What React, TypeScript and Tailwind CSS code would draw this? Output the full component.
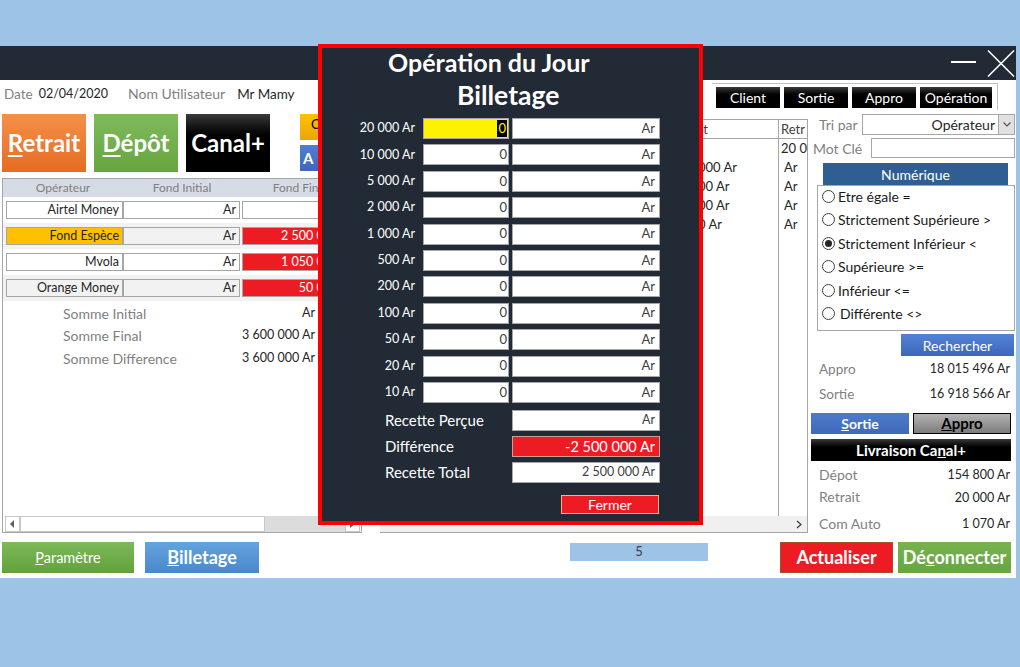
import React from "react";

const labelGray = "text-[#7f7f7f]";
const dark = "text-[#262626]";

function Cell({ w, bg, text, color }: { w: string; bg: string; text?: string; color?: string }) {
  return (
    <div className={`${w} shrink-0 h-[18px] border border-[#a6a6a6] ${bg} flex items-center justify-end pr-[3px] text-[12.5px] leading-none ${color ?? dark} overflow-hidden whitespace-nowrap`}>
      {text}
    </div>
  );
}

function Radio({ checked, label, far }: { checked?: boolean; label: string; far?: boolean }) {
  return (
    <div className="flex items-center h-[20px]">
      <span className="ml-[4px] shrink-0 w-[13px] h-[13px] rounded-full border border-[#404040] bg-white flex items-center justify-center">
        {checked && <span className="w-[7px] h-[7px] rounded-full bg-[#262626]" />}
      </span>
      <span className={`${far ? "ml-[5px]" : "ml-[3px]"} text-[14px] text-[#1a1a1a] whitespace-nowrap`}>{label}</span>
    </div>
  );
}

function BillRow({ label, first }: { label: string; first?: boolean }) {
  return (
    <div className="flex items-center h-[21px]">
      <div className="w-[93px] shrink-0 text-right text-[12.5px] text-white whitespace-nowrap">{label}</div>
      <div className={`ml-[8px] shrink-0 w-[86px] h-[21px] border border-[#a6a6a6] ${first ? "bg-[#fff200]" : "bg-white"} flex items-center justify-end pr-[1px] text-[13px] text-[#404040]`}>
        {first ? <span className="bg-black text-[#fff200] px-[1px] leading-[17px]">0</span> : "0"}
      </div>
      <div className="ml-[3px] shrink-0 w-[148px] h-[21px] border border-[#a6a6a6] bg-white flex items-center justify-end pr-[4px] text-[13px] text-[#404040]">Ar</div>
    </div>
  );
}

function TotRow({ label, value, red }: { label: string; value: string; red?: boolean }) {
  return (
    <div className="flex items-center h-[21px]">
      <div className="w-[190px] shrink-0 pl-[63px] text-[15px] text-white whitespace-nowrap">{label}</div>
      <div className={`w-[148px] shrink-0 h-[21px] border ${red ? "border-[#c9a18f] bg-[#ed1c24] text-white text-[14.5px]" : "border-[#a6a6a6] bg-white text-[#404040] text-[12.5px]"} flex items-center justify-end pr-[4px] whitespace-nowrap`}>{value}</div>
    </div>
  );
}

function ValRow({ label, value, extra }: { label: string; value: string; extra: string }) {
  return (
    <div className={`h-[22px] flex items-center justify-between pl-[8px] pr-[6px] ${extra}`}>
      <span className={`${labelGray} text-[13.5px]`}>{label}</span>
      <span className={`${dark} text-[12.5px]`}>{value}</span>
    </div>
  );
}

export default function App() {
  const bills = ["20 000 Ar", "10 000 Ar", "5 000 Ar", "2 000 Ar", "1 000 Ar", "500 Ar", "200 Ar", "100 Ar", "50 Ar", "20 Ar", "10 Ar"];
  return (
    <div className="relative w-[1020px] h-[667px] bg-[#9dc3e6] overflow-hidden font-['Lato',sans-serif]">
      <div className="h-[46px]" />
      <div className="w-[1016px] bg-white">
        {/* title bar */}
        <div className="h-[34px] bg-[#222a35] flex items-start justify-end pt-[4px] pr-[1px] gap-[10px]">
          <svg width="26" height="26" viewBox="0 0 26 26"><line x1="0" y1="12" x2="25" y2="12" stroke="white" strokeWidth="2" /></svg>
          <svg width="28" height="27" viewBox="0 0 28 27"><line x1="1" y1="0.5" x2="27" y2="26.5" stroke="white" strokeWidth="1.5" /><line x1="27" y1="0.5" x2="1" y2="26.5" stroke="white" strokeWidth="1.5" /></svg>
        </div>
        {/* body */}
        <div className="h-[498px] flex flex-col">
          {/* row 1 */}
          <div className="h-[30px] flex items-start">
            <div className="pt-[5px] pl-[4px] flex items-center leading-[18px] whitespace-nowrap">
              <span className={`${labelGray} text-[13.5px]`}>Date</span>
              <span className={`ml-[6px] ${dark} text-[12.5px]`}>02/04/2020</span>
              <span className={`ml-[20px] ${labelGray} text-[14px]`}>Nom Utilisateur</span>
              <span className={`ml-[12px] ${dark} text-[13.5px]`}>Mr Mamy</span>
            </div>
            <div className="ml-auto mr-[18px] mt-[3px] w-[286px] h-[27px] border-t border-r border-[#bfbfbf] flex items-start gap-[4px] pl-[4px] pt-[3px]">
              {["Client", "Sortie", "Appro", "Opération"].map((t, i) => (
                <div key={t} className={`${i === 3 ? "w-[72px]" : "w-[64px]"} shrink-0 h-[21px] bg-linear-to-b from-[#3c3c3c] via-black to-black text-white text-[14px] flex items-center justify-center`}>{t}</div>
              ))}
            </div>
          </div>
          {/* row 2 */}
          <div className="h-[425px] flex">
            {/* left column */}
            <div className="w-[362px] shrink-0 flex flex-col">
              <div className="mt-[4px] h-[58px] flex pl-[2px] gap-[8px]">
                <div className="w-[84px] shrink-0 h-[58px] bg-linear-to-b from-[#f39048] to-[#e56c20] text-white font-bold text-[24px] flex items-center justify-center"><span><span className="underline decoration-2 underline-offset-[3px]">R</span>etrait</span></div>
                <div className="w-[84px] shrink-0 h-[58px] bg-linear-to-b from-[#7fba5c] to-[#67a53f] text-white font-bold text-[24px] flex items-center justify-center"><span><span className="underline decoration-2 underline-offset-[3px]">D</span>épôt</span></div>
                <div className="w-[84px] shrink-0 h-[58px] bg-linear-to-b from-[#3a3a3a] via-black to-black text-white font-bold text-[24px] flex items-center justify-center">Canal+</div>
                <div className="ml-[22px] shrink-0 flex flex-col gap-[5px]">
                  <div className="w-[18px] h-[26px] bg-linear-to-b from-[#ffc000] to-[#e8a800] text-black text-[13px] pl-[11px] leading-[16px] pt-[2px]">C</div>
                  <div className="w-[18px] h-[26px] bg-linear-to-b from-[#4f7fd0] to-[#3d67bb] text-white font-bold text-[15px] pl-[3px] flex items-center">A</div>
                </div>
              </div>
              <div className="mt-[6px] ml-[2px] w-[360px] h-[355px] border border-[#a6a6a6] flex flex-col">
                <div className="h-[18px] bg-[#d6dce5] flex items-center text-[12px] text-[#7f7f7f] whitespace-nowrap">
                  <span className="w-[120px] text-center">Opérateur</span>
                  <span className="w-[118px] text-center">Fond Initial</span>
                  <span className="w-[118px] text-center">Fond Final</span>
                </div>
                {[
                  { n: "Airtel Money", c1: "bg-white", c2: "bg-white", c3: "bg-white", v: "", band: "bg-white" },
                  { n: "Fond Espèce", c1: "bg-[#ffc000]", c2: "bg-[#f2f2f2]", c3: "bg-[#ed1c24]", v: "2 500 000 Ar", band: "bg-[#f2f2f2]" },
                  { n: "Mvola", c1: "bg-white", c2: "bg-white", c3: "bg-[#ed1c24]", v: "1 050 000 Ar", band: "bg-white" },
                  { n: "Orange Money", c1: "bg-[#f2f2f2]", c2: "bg-[#f2f2f2]", c3: "bg-[#ed1c24]", v: "50 000 Ar", band: "bg-[#f2f2f2]" },
                ].map((r) => (
                  <div key={r.n} className={`h-[26px] pt-[4px] pl-[3px] flex ${r.band}`}>
                    <Cell w="w-[117px]" bg={r.c1} text={r.n} />
                    <Cell w="w-[117px]" bg={r.c2} text="Ar" />
                    <div className="w-[2px] shrink-0" />
                    <Cell w="w-[116px]" bg={r.c3} text={r.v} color="text-white" />
                  </div>
                ))}
                <div className="mt-[1px] flex flex-col whitespace-nowrap">
                  {[
                    ["Somme Initial", "Ar"],
                    ["Somme Final", "3 600 000 Ar"],
                    ["Somme Difference", "3 600 000 Ar"],
                  ].map(([l, v]) => (
                    <div key={l} className="h-[22.5px] w-[312px] pl-[60px] flex items-center justify-between">
                      <span className={`${labelGray} text-[14px]`}>{l}</span>
                      <span className={`${dark} text-[12.5px]`}>{v}</span>
                    </div>
                  ))}
                </div>
                <div className="mt-auto h-[16px] flex items-stretch">
                  <div className="ml-[2px] w-[15px] border border-[#c8c8c8] bg-white flex items-center justify-center">
                    <svg width="5" height="8" viewBox="0 0 5 8"><polygon points="4,0 4,8 0,4" fill="#606060" /></svg>
                  </div>
                  <div className="w-[245px] border border-[#c8c8c8] bg-white" />
                  <div className="w-[80px] bg-[#dcdcdc]" />
                  <div className="w-[15px] border border-[#c8c8c8] bg-white flex items-center justify-center">
                    <svg width="5" height="8" viewBox="0 0 5 8"><polygon points="0,0 0,8 5,4" fill="#606060" /></svg>
                  </div>
                </div>
              </div>
            </div>
            {/* middle list */}
            <div className="ml-[18px] mt-[9px] w-[428px] shrink-0 h-[414px] border-t border-r border-b border-[#a6a6a6] flex flex-col">
              <div className="h-[19px] border-b border-[#a6a6a6] flex text-[13px] text-[#404040] whitespace-nowrap">
                <div className="w-[288px] shrink-0" />
                <div className="w-[110px] shrink-0 pl-[4px] leading-[18px]">Dépôt</div>
                <div className="w-[29px] shrink-0 border-l border-[#a6a6a6] pl-[2px] leading-[18px] overflow-hidden">Retr</div>
              </div>
              <div className="flex-1 flex">
                <div className="w-[288px] shrink-0" />
                <div className="w-[110px] shrink-0 flex flex-col text-[13px] text-[#262626] whitespace-nowrap pl-[4px]">
                  {["", "500 000 Ar", "50 000 Ar", "50 000 Ar", "1 000 Ar"].map((v, i) => (
                    <div key={i} className="h-[19px] leading-[19px]">{v}</div>
                  ))}
                </div>
                <div className="w-[29px] shrink-0 border-l border-[#a6a6a6] flex flex-col text-[13px] text-[#262626] whitespace-nowrap overflow-hidden">
                  {["20 0", "Ar", "Ar", "Ar", "Ar"].map((v, i) => (
                    <div key={i} className={`h-[19px] leading-[19px] ${i === 0 ? "pl-[2px]" : "pl-[5px]"}`}>{v}</div>
                  ))}
                </div>
              </div>
              <div className="h-[16px] bg-[#f0f0f0] flex items-center justify-end pr-[5px]">
                <svg width="6" height="9" viewBox="0 0 6 9"><polyline points="1,1 5,4.5 1,8" fill="none" stroke="#404040" strokeWidth="1.3" /></svg>
              </div>
            </div>
            {/* right panel */}
            <div className="ml-[3px] w-[205px] shrink-0 flex flex-col text-[13px] whitespace-nowrap">
              <div className="mt-[4px] h-[21px] flex items-center">
                <span className={`ml-[8px] ${labelGray} text-[14px]`}>Tri par</span>
                <div className="ml-auto mr-[1px] w-[153px] h-[21px] border border-[#a6a6a6] flex items-center justify-end">
                  <span className={`${dark} mr-[3px] text-[14px]`}>Opérateur</span>
                  <div className="w-[16px] h-[19px] bg-[#e1e1e1] border-l border-[#a6a6a6] flex items-center justify-center">
                    <svg width="8" height="5" viewBox="0 0 8 5"><polyline points="0.5,0.5 4,4 7.5,0.5" fill="none" stroke="#505050" strokeWidth="1.1" /></svg>
                  </div>
                </div>
              </div>
              <div className="mt-[3px] h-[20px] flex items-center">
                <span className={`ml-[2px] ${labelGray} text-[14px]`}>Mot Clé</span>
                <div className="ml-auto mr-[1px] w-[144px] h-[20px] border border-[#a6a6a6]" />
              </div>
              <div className="mt-[5px] ml-[12px] w-[185px] h-[22px] bg-[#2f5f92] text-white text-[14px] flex items-center justify-center">Numérique</div>
              <div className="ml-[6px] w-[198px] h-[146px] border border-[#a6a6a6] flex flex-col gap-[3.6px]">
                <Radio label="Etre égale =" />
                <Radio label="Strictement Supérieure >" />
                <Radio label="Strictement Inférieur <" checked />
                <Radio label="Supérieure >=" />
                <Radio label="Inférieur <=" />
                <Radio label="Différente <>" far />
              </div>
              <div className="mt-[3px] ml-[90px] w-[113px] h-[22px] bg-linear-to-b from-[#5283d6] to-[#3d67bb] text-white text-[14px] flex items-center justify-center">Rechercher</div>
              <ValRow label="Appro" value="18 015 496 Ar" extra="mt-[2px]" />
              <ValRow label="Sortie" value="16 918 566 Ar" extra="mt-[3px]" />
              <div className="mt-[8px] flex gap-[4px]">
                <div className="w-[98px] h-[21px] bg-linear-to-b from-[#4d7bcc] to-[#3f69b8] text-white font-bold text-[14px] flex items-center justify-center"><span><span className="underline">S</span>ortie</span></div>
                <div className="w-[98px] h-[21px] bg-linear-to-b from-[#b4b4b4] to-[#7c7c7c] border border-black text-black font-bold text-[15px] flex items-center justify-center"><span><span className="underline">A</span>ppro</span></div>
              </div>
              <div className="mt-[5px] w-[200px] h-[22px] bg-linear-to-b from-[#3a3a3a] via-black to-black text-white font-bold text-[15px] flex items-center justify-center"><span>Livraison Ca<span className="underline">n</span>al+</span></div>
              <div className="mt-[2px] h-[22px] flex items-center justify-between pl-[8px] pr-[6px]">
                <span className={`${labelGray} text-[14px]`}>Dépot</span><span className={`${dark} text-[12.5px] mt-[3px]`}>154 800 Ar</span>
              </div>
              <div className="h-[22px] flex items-center justify-between pl-[8px] pr-[6px]">
                <span className={`${labelGray} text-[14px]`}>Retrait</span><span className={`${dark} text-[12.5px] mt-[5px]`}>20 000 Ar</span>
              </div>
              <div className="mt-[5px] h-[22px] flex items-center justify-between pl-[8px] pr-[6px]">
                <span className={`${labelGray} text-[14px]`}>Com Auto</span><span className={`${dark} text-[12.5px] mt-[2px]`}>1 070 Ar</span>
              </div>
            </div>
          </div>
          {/* bottom row */}
          <div className="pt-[7px] flex items-start">
            <div className="ml-[2px] shrink-0 w-[132px] h-[31px] bg-linear-to-b from-[#7cba5a] to-[#62a13b] text-white text-[14.5px] flex items-center justify-center"><span><span className="underline">P</span>aramètre</span></div>
            <div className="ml-[11px] shrink-0 w-[114px] h-[31px] bg-linear-to-b from-[#64a3dc] to-[#4a88cc] text-white font-bold text-[18px] flex items-center justify-center"><span><span className="underline">B</span>illetage</span></div>
            <div className="ml-[311px] shrink-0 mt-[1px] w-[138px] h-[18px] bg-[#9dc3e6] text-[#404040] text-[13px] flex items-center justify-center">5</div>
            <div className="ml-[72px] shrink-0 w-[113px] h-[31px] bg-[#ed1c24] border border-[#a8502c] text-white font-bold text-[18px] flex items-center justify-center">Actualiser</div>
            <div className="ml-[5px] shrink-0 w-[113px] h-[31px] bg-linear-to-b from-[#77b34f] to-[#67a53f] text-white font-bold text-[18px] flex items-center justify-center"><span>Dé<span className="underline">c</span>onnecter</span></div>
          </div>
        </div>
      </div>

      {/* modal */}
      <div className="absolute left-[318px] top-[44px] w-[385px] h-[481px] border-4 border-[#ff0000] bg-[#222a35] flex flex-col">
        <div className="h-[29px] pl-[66px] text-white font-bold text-[25px] leading-[28px] whitespace-nowrap">Opération du Jour</div>
        <div className="mt-[4px] h-[29px] pl-[135px] text-white font-bold text-[26.5px] leading-[29px] whitespace-nowrap">Billetage</div>
        <div className="mt-[8px] flex flex-col gap-[5.4px]">
          {bills.map((b, i) => (
            <BillRow key={b} label={b} first={i === 0} />
          ))}
        </div>
        <div className="mt-[7px] flex flex-col gap-[5px]">
          <TotRow label="Recette Perçue" value="Ar" />
          <TotRow label="Différence" value="-2 500 000 Ar" red />
          <TotRow label="Recette Total" value="2 500 000 Ar" />
        </div>
        <div className="mt-[12px] ml-[239px] w-[98px] h-[19px] bg-[#ed1c24] border border-[#f4b183] text-white text-[14px] flex items-center justify-center">Fermer</div>
      </div>
    </div>
  );
}
